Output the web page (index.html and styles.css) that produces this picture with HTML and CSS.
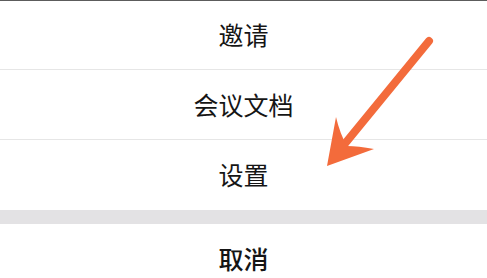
FILE: index.html
```html
<!DOCTYPE html>
<html lang="zh-CN">
<head>
  <meta charset="UTF-8">
  <meta name="viewport" content="width=device-width, initial-scale=1.0">
  <title>操作菜单</title>
  <link rel="stylesheet" href="styles.css">
</head>
<body>
  <div class="sheet">
    <!-- menu actions -->
    <div class="group">
      <div class="item">邀请</div>
      <div class="item">会议文档</div>
      <div class="item">设置</div>
    </div>
    <div class="gap"></div>
    <div class="group">
      <div class="item cancel">取消</div>
    </div>

    <!-- hint arrow drawn over the menu -->
    <svg class="arrow" width="487" height="278" viewBox="0 0 487 278">
      <line x1="429" y1="41" x2="343" y2="146" stroke="#f36b3b" stroke-width="8" stroke-linecap="round"/>
      <path d="M327 166 L336 117 Q340 134 347 146 Q358 146 374 149 Z" fill="#f36b3b"/>
    </svg>
  </div>
</body>
</html>
```

FILE: styles.css
```css
body {
  margin: 0;
  background-color: #fff;
  font-family: "Noto Sans CJK SC", "Noto Sans", sans-serif;
  color: #151515;
}
.sheet {
  position: relative;
  width: 487px;
  height: 278px;
  overflow: hidden;
  border-top: 1px solid #5c5c5c;
  box-sizing: border-box;
}
.group {
  background-color: #fff;
}
.item {
  height: 70px;
  display: flex;
  align-items: center;
  justify-content: center;
  padding-bottom: 2px;
  box-sizing: border-box;
  font-size: 25px;
  border-bottom: 1px solid #e6e6e6;
}
.item:first-child {
  height: 69px;
}
.item:last-child {
  border-bottom: none;
}
.gap {
  height: 14px;
  background-color: #e3e2e4;
}
.cancel {
  height: 70px;
  font-weight: 500;
}
.arrow {
  position: absolute;
  left: 0;
  top: -1px;
  pointer-events: none;
}
```
